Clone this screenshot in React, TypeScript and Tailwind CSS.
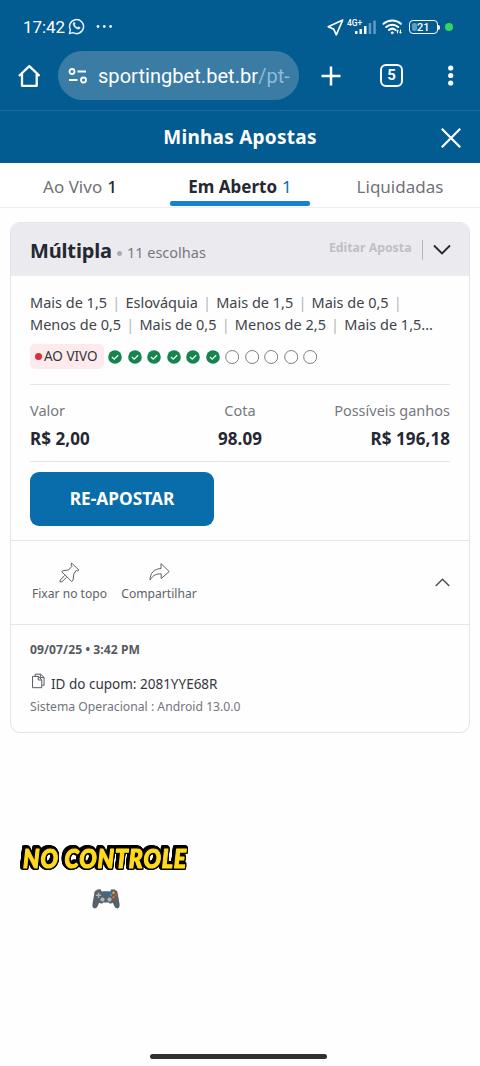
import React, { useState } from 'react';

type TabKey = 'live' | 'open' | 'settled';

interface TabItem {
  key: TabKey;
  label: string;
  count?: number;
}

const TABS: TabItem[] = [
  { key: 'live', label: 'Ao Vivo', count: 1 },
  { key: 'open', label: 'Em Aberto', count: 1 },
  { key: 'settled', label: 'Liquidadas' },
];

const PICK_LINES = [
  ['Mais de 1,5', 'Eslováquia', 'Mais de 1,5', 'Mais de 0,5', ''],
  ['Menos de 0,5', 'Mais de 0,5', 'Menos de 2,5', 'Mais de 1,5...'],
];

const TOTAL_PICKS = 11;
const WON_PICKS = 6;

function StatusBar() {
  return (
    <div className="flex h-[51px] items-start pt-[17px] pl-[23px] font-['Roboto',sans-serif] text-white">
      <span className="w-[45px] text-[17px] leading-5 tracking-[-0.1px]">17:42</span>
      <svg className="mt-[1px] h-[17px] w-[17px]" viewBox="0 0 17 17" fill="none" stroke="#e6f2fa" strokeWidth="1.5">
        <path d="M1.4 15.6l1-3.7A7 7 0 1 1 5 14.6z" strokeLinejoin="round" />
        <path d="M5.4 4.6c.8-.9 1.4-.3 1.8.9.2.6-.4.9-.5 1.2.5 1.3 1.5 2.2 2.8 2.8.4-.1.8-1 1.3-.8 1.6.6 1.8 1 1.2 1.8-2.4 2.6-8.4-2.6-6.6-5.9z" fill="#e6f2fa" strokeWidth="0.3" />
      </svg>
      <svg className="mt-[7px] ml-[11px] h-[5px] w-[17px]" viewBox="0 0 17 5" fill="#e6f2fa">
        <circle cx="2" cy="2.5" r="1.4" />
        <circle cx="8.3" cy="2.5" r="1.4" />
        <circle cx="14.6" cy="2.5" r="1.4" />
      </svg>
      <svg className="mt-[2px] ml-[214px] h-[17px] w-[17px]" viewBox="0 0 17 17" fill="none" stroke="#fff" strokeWidth="1.7" strokeLinejoin="round">
        <path d="M15.7 1L1.2 7.7l5.5 2.4 2.6 5.7z" />
      </svg>
      <div className="ml-[3px] flex w-[33px] items-start">
        <span className="w-[8px] text-[8.5px] leading-[12px] font-medium whitespace-nowrap">4G+</span>
        <svg className="mt-[3px] h-[15px] w-[22px] shrink-0" viewBox="0 0 22 15" fill="#fff">
          <rect x="0" y="11" width="2.5" height="3" rx="0.6" />
          <rect x="4.5" y="9" width="2.5" height="5" rx="0.6" />
          <rect x="9" y="6" width="2.5" height="8" rx="0.6" />
          <rect x="13.7" y="3" width="2.5" height="11" rx="0.6" fill="#5f9cc0" />
          <rect x="18.3" y="0.5" width="2.5" height="13.5" rx="0.6" fill="#5f9cc0" />
        </svg>
      </div>
      <svg className="mt-[1px] ml-[2px] h-[17px] w-[22px]" viewBox="0 0 22 17" fill="none" stroke="#fff" strokeWidth="2" strokeLinecap="round">
        <path d="M1.5 5.8a13 13 0 0 1 17.5 0M4.2 9a9 9 0 0 1 12 0M7 12a5 5 0 0 1 6.5 0" />
        <circle cx="10.2" cy="14.8" r="1" fill="#fff" strokeWidth="0.8" />
        <path d="M15.5 15v-2.5M14.5 13l1-1 1 1M18.5 12v2.8M17.5 14.2l1 1 1-1" strokeWidth="1" />
      </svg>
      <div className="mt-[3px] ml-[5px] flex h-[14px] w-[29px] items-center rounded-[4px] border-[1.5px] border-white p-[2px] text-[11px] leading-none font-medium">
        <span className="h-full w-[5px] rounded-[2px] bg-[#5f9cc0]" />
        <span>21</span>
      </div>
      <div className="mt-[8px] h-[5px] w-[2px] rounded-r-full bg-white" />
      <div className="mt-[6px] ml-[5px] h-[8px] w-[8px] rounded-full bg-[#32d85e]" />
    </div>
  );
}

function BrowserBar() {
  return (
    <div className="flex h-[59px] items-start text-white">
      <svg className="mt-[13px] ml-[18px] h-6 w-[22px]" viewBox="0 0 22 24" fill="none" stroke="#fff" strokeWidth="2.3">
        <path d="M1 12L11.3 2.2 21.6 12M4 10v11.8h14.7V10" strokeLinejoin="round" />
      </svg>
      <div className="ml-[18px] flex h-[49px] w-[241px] items-center rounded-full bg-[#3b7ca5] pl-[10px]">
        <svg className="h-[16px] w-[20px]" viewBox="0 0 20 16" fill="none" stroke="#fff" strokeWidth="1.8">
          <circle cx="4" cy="3.5" r="2.5" />
          <path d="M9.5 3.5H18M1 12h8.5" />
          <circle cx="15.5" cy="12" r="2.5" />
        </svg>
        <span className="ml-[10px] font-['Roboto',sans-serif] text-[20px] leading-6 tracking-[0.05px] whitespace-nowrap">
          sportingbet.bet.br<span className="text-[#8dbbd9]">/pt-</span>
        </span>
      </div>
      <svg className="mt-[15px] ml-[22px] h-5 w-5" viewBox="0 0 20 20" stroke="#fff" strokeWidth="2.5">
        <path d="M10 0.5v19M0.5 10h19" />
      </svg>
      <div className="mt-[13px] ml-[39px] flex h-[23px] w-[23px] items-center justify-center rounded-[6px] border-[2.5px] border-white font-['Roboto',sans-serif] text-[15px] leading-none font-bold">
        5
      </div>
      <svg className="mt-[14px] ml-[44px] h-[21px] w-[8px]" viewBox="0 0 8 21" fill="#fff">
        <circle cx="3.7" cy="3" r="2.6" />
        <circle cx="3.7" cy="10.5" r="2.6" />
        <circle cx="3.7" cy="18" r="2.6" />
      </svg>
    </div>
  );
}

function PageHeader() {
  return (
    <div className="grid h-[53px] grid-cols-[60px_1fr_60px] items-center border-t border-[#1e6d9f] text-white">
      <span />
      <h1 className="text-center text-[19px] leading-6 font-bold tracking-[0.25px]">Minhas Apostas</h1>
      <button type="button" aria-label="Fechar" className="flex justify-center pt-px pl-px">
        <svg className="h-[20px] w-[20px]" viewBox="0 0 20 20" stroke="#fff" strokeWidth="2.2">
          <path d="M0.8 0.8l18.4 18.4M19.2 0.8L0.8 19.2" />
        </svg>
      </button>
    </div>
  );
}

function PickDots() {
  return (
    <div className="ml-[4px] flex gap-[5.55px]">
      {Array.from({ length: TOTAL_PICKS }, (_, idx) =>
        idx < WON_PICKS ? (
          <svg key={idx} className="h-[14px] w-[14px]" viewBox="0 0 14 14">
            <circle cx="7" cy="7" r="6.8" fill="#17834f" />
            <path d="M4 7l2.2 2.2 4-3.9" fill="none" stroke="#e8fff3" strokeWidth="1.3" />
          </svg>
        ) : (
          <svg key={idx} className="h-[14px] w-[14px]" viewBox="0 0 14 14">
            <circle cx="7.2" cy="7" r="6.5" fill="none" stroke="#6d7076" strokeWidth="0.9" />
          </svg>
        )
      )}
    </div>
  );
}

function BetCard() {
  return (
    <section className="mx-[10px] mt-[14px] h-[511px] overflow-hidden rounded-[10px] border border-[#e4e4e9] bg-[#fefefe]">
      {/* Title row */}
      <div className="flex h-[53px] items-start bg-[#ebeaee] pr-[18px] pl-[19px]">
        <h2 className="pt-[14px] text-[20px] leading-7 font-bold tracking-[-0.15px] text-[#252832]">Múltipla</h2>
        <span className="mt-[28px] ml-[5px] h-[5px] w-[5px] rounded-full bg-[#a9abb0]" />
        <span className="mt-[19px] ml-[5px] text-[14.5px] leading-5 text-[#77797f]">11 escolhas</span>
        <span className="mt-[15px] ml-auto text-[12.3px] leading-5 font-bold text-[#bfc0c4]">Editar Aposta</span>
        <span className="mt-[17px] ml-[10px] h-[20px] w-[1.5px] bg-[#b5b6ba]" />
        <svg className="mt-[21px] ml-[10px] h-[12px] w-[18px]" viewBox="0 0 18 12" fill="none" stroke="#252832" strokeWidth="1.8">
          <path d="M1 1.5l8 8 8-8" />
        </svg>
      </div>

      {/* Picks */}
      <div className="px-[19px]">
        <div className="pt-[15px] text-[14.5px] leading-[22px] text-[#40434a]">
          {PICK_LINES.map((line, idx) => (
            <div key={idx} className="flex whitespace-nowrap">
              {line.map((pick, i) => (
                <React.Fragment key={i}>
                  {i > 0 && <span className="w-[18.3px] text-center text-[#b4b6ba]">|</span>}
                  <span>{pick}</span>
                </React.Fragment>
              ))}
            </div>
          ))}
        </div>
        <div className="mt-[9px] flex h-[25px] items-center">
          <span className="flex h-[25px] w-[74px] items-center rounded-[5px] bg-[#fdeaec] pl-[5px] text-[13.5px] whitespace-nowrap text-[#33353c]">
            <span className="mr-[2px] h-[7px] w-[7px] shrink-0 rounded-full bg-[#dc2d35]" />
            AO VIVO
          </span>
          <PickDots />
        </div>

        {/* Stake, odds, possible win */}
        <div className="mt-[15px] grid h-[78px] grid-cols-3 border-y border-[#e3e4e7] pt-[14px] whitespace-nowrap">
          <div>
            <div className="text-[14.5px] leading-[22px] text-[#77797f]">Valor</div>
            <div className="mt-[7px] text-[17px] leading-[22px] font-bold tracking-[0.08px] text-[#252832]">R$ 2,00</div>
          </div>
          <div className="text-center">
            <div className="text-[14.5px] leading-[22px] text-[#77797f]">Cota</div>
            <div className="mt-[7px] text-[17px] leading-[22px] font-bold tracking-[0.08px] text-[#252832]">98.09</div>
          </div>
          <div className="text-right">
            <div className="text-[14.5px] leading-[22px] text-[#77797f]">Possíveis ganhos</div>
            <div className="mt-[7px] text-[17px] leading-[22px] font-bold tracking-[0.08px] text-[#252832]">R$ 196,18</div>
          </div>
        </div>
        <button type="button" className="mt-[10px] block h-[54px] w-[184px] rounded-[9px] bg-[#096dac] text-[17.3px] font-bold text-white">
          RE-APOSTAR
        </button>
      </div>

      {/* Actions */}
      <div className="mt-[14px] flex h-[85px] items-start border-y border-[#e6e6ea] pt-[21px] pr-[19px] pl-[19px] text-[#606269]">
        <button type="button" className="flex w-[79px] flex-col items-center">
          <svg className="h-[21px] w-[21px]" viewBox="0 0 21 21" fill="none" stroke="#5e6067" strokeWidth="1">
            <path d="M12.5 1l7.5 7.1-1.5.9-1.3-.7-2.4 3.7-.7 6-1.4 1.5-10-9.8L4 8.7l5.7-.8 3.2-3.5-.8-1.5zM5.7 13.4l-4.5 4.7-.2 1.9 1.9-.2 4.7-4.5" strokeLinejoin="round" />
          </svg>
          <span className="text-[12.1px] leading-[22px] whitespace-nowrap">Fixar no topo</span>
        </button>
        <button type="button" className="ml-[10px] flex w-[80px] flex-col items-center">
          <svg className="h-[21px] w-[21px]" viewBox="0 0 21 21" fill="none" stroke="#5e6067" strokeWidth="1" strokeLinejoin="round">
            <path d="M12 1.6l8.2 7.9-8 7.1v-4.8C7.500 11.800 4 13 1 18c.2-7.200 4-11.100 11-11.500z" />
          </svg>
          <span className="text-[12.1px] leading-[22px] whitespace-nowrap">Compartilhar</span>
        </button>
        <svg className="mt-[16px] ml-auto h-[9px] w-[15px]" viewBox="0 0 15 9" fill="none" stroke="#4d4f56" strokeWidth="1.5">
          <path d="M0.7 8L7.5 1.3 14.3 8" />
        </svg>
      </div>

      {/* Coupon details */}
      <div className="px-[19px] pt-[15px] whitespace-nowrap">
        <div className="text-[12.1px] leading-5 font-bold tracking-[0.08px] text-[#565960]">09/07/25 • 3:42 PM</div>
        <div className="mt-[12px] flex h-[24px] items-center text-[#35373e]">
          <svg className="mb-[6px] ml-[2px] h-[16px] w-[13px]" viewBox="0 0 14 16" fill="none" stroke="#4d4f56" strokeWidth="1">
            <path d="M3.5 3V.6h5.7l3.800 3.500v8.500h-2M9 .8v3.500h4" />
            <path d="M.6 3h6.200l3.700 3.700v8.500H.6zM6.700 3v3.900h3.800" />
          </svg>
          <span className="ml-[6px] text-[13.5px] leading-5">ID do cupom: 2081YYE68R</span>
        </div>
        <div className="mt-[1px] text-[12.2px] leading-5 text-[#73757b]">Sistema Operacional : Android 13.0.0</div>
      </div>
    </section>
  );
}

function StickerCaption() {
  return (
    <svg className="mt-[100px] ml-[10px] h-[52px] w-[200px] [filter:drop-shadow(1.4px_0_0_#000)_drop-shadow(-1.4px_0_0_#000)_drop-shadow(0_1.4px_0_#000)_drop-shadow(0_-1.4px_0_#000)_drop-shadow(0.5px_0.5px_0_#000)_drop-shadow(-0.5px_-0.5px_0_#000)]" viewBox="0 0 200 52">
      <text
        x="13"
        y="35"
        textLength="164"
        lengthAdjust="spacingAndGlyphs"
        className="fill-[#ffd91c] stroke-[#ffd91c] stroke-[1.2px] font-['Lato',sans-serif] text-[26px] font-black tracking-[1px] italic [stroke-linejoin:round]"
      >
        NO CONTROLE
      </text>
    </svg>
  );
}

function Gamepad() {
  return (
    <svg className="mt-[4px] ml-[92px] h-[20px] w-[28px]" viewBox="0 0 28 20">
      <path d="M5 1.2h4l1 1.300h8l1-1.300h4c1.300 0 2 .6 2.500 2L27.500 14.700c.5 2.800-.5 4.700-2.200 4.700-1.500 0-2.300-1-3-2.500l-1.500-3.100c-1 1-3.400 1.200-4.100-.2h-5.400c-.7 1.400-3.100 1.200-4.100.2l-1.500 3.100c-.7 1.500-1.500 2.500-3 2.500C1 19.400 0 17.500.5 14.700L2.500 3.200c.5-1.400 1.200-2 2.500-2z" fill="#596067" />
      <path d="M5 1h4M19 1h4" stroke="#394047" strokeWidth="1" />
      <rect x="10.5" y="2.6" width="7" height="3.2" rx="0.6" fill="#376b91" />
      <path d="M6.5 3.5v5.4M3.8 6.2h5.4" stroke="#aab0b6" strokeWidth="1.4" />
      <circle cx="10.5" cy="10.6" r="2.1" fill="#aeb5bc" />
      <circle cx="17.5" cy="10.6" r="2.1" fill="#aeb5bc" />
      <circle cx="21.5" cy="3.8" r="1.2" fill="#f0b429" />
      <circle cx="19.2" cy="6" r="1.2" fill="#3f8fd0" />
      <circle cx="23.8" cy="6" r="1.2" fill="#e64432" />
      <circle cx="21.5" cy="8.2" r="1.2" fill="#e7642c" />
    </svg>
  );
}

export default function App() {
  const [activeTab, setActiveTab] = useState<TabKey>('open');

  return (
    <div className="flex h-[1066px] w-[480px] flex-col overflow-hidden bg-[#fefefe] font-['Noto_Sans',sans-serif]">
      <div className="bg-[#025b91]">
        <StatusBar />
        <BrowserBar />
        <PageHeader />
      </div>

      <nav className="grid h-[45px] grid-cols-3 border-b border-[#ededf0] bg-white">
        {TABS.map(tab => (
          <button
            key={tab.key}
            type="button"
            onClick={() => setActiveTab(tab.key)}
            className="mx-[10px] flex h-[43px] flex-col justify-between pt-[12px] text-[17px] leading-6 whitespace-nowrap"
          >
            <span className={`self-center ${activeTab === tab.key ? 'font-bold text-[#252832]' : 'text-[#707278]'}`}>
              {tab.label}
              {tab.count && (
                <span className={`ml-[5px] ${activeTab === tab.key ? 'font-normal text-[#096dac]' : 'font-medium text-[#252832]'}`}>
                  {tab.count}
                </span>
              )}
            </span>
            {activeTab === tab.key && <span className="h-[5px] w-full rounded-[2px] bg-[#1680d1]" />}
          </button>
        ))}
      </nav>

      <BetCard />
      <StickerCaption />
      <Gamepad />

      {/* System gesture handle */}
      <div className="mt-auto mb-[7px] ml-[150px] h-[5px] w-[177px] rounded-full bg-[#303030]" />
    </div>
  );
}
